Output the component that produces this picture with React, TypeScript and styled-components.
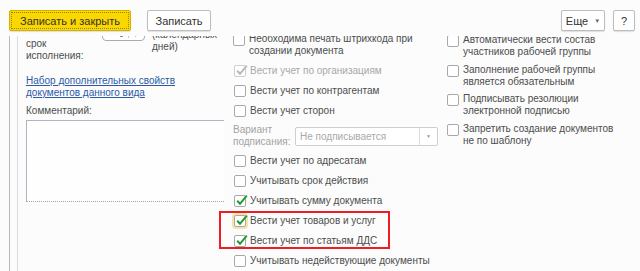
import React from 'react';
import styled, { createGlobalStyle, css } from 'styled-components';

const GlobalStyle = createGlobalStyle`
  html, body {
    margin: 0;
    padding: 0;
    background: #fbfcfb;
  }
  body {
    font-family: "Liberation Sans", Arial, sans-serif;
    font-size: 10px;
    color: #4d4d4d;
  }
`;

const Page = styled.div`
  width: 640px;
  height: 271px;
  overflow: hidden;
  display: flex;
  flex-direction: column;
  background: #fbfcfb;
`;

const Toolbar = styled.div`
  height: 36px;
  flex: none;
  display: flex;
  align-items: flex-start;
  padding: 10px 5px 0 9px;
  box-sizing: border-box;
`;

const Spacer = styled.div`
  flex: 1;
`;

const Button = styled.button<{ $primary?: boolean; $w: number; $gap?: number }>`
  width: ${(p) => p.$w}px;
  height: 21px;
  margin-right: ${(p) => p.$gap ?? 0}px;
  padding: 0;
  font-family: inherit;
  font-size: 11px;
  color: #333;
  border-radius: 2px;
  border: 1px solid #bdbdbd;
  background: #ffffff;
  box-shadow: 0 1px 1px rgba(0, 0, 0, 0.12);
  display: flex;
  align-items: center;
  justify-content: center;
  gap: 6px;
  ${(p) =>
    p.$primary &&
    css`
      background: #fad700;
      border: 1px solid #d2b300;
      outline: 1px dotted #9c8400;
      outline-offset: -3px;
    `}
`;

const Caret = styled.span`
  font-size: 6px;
  color: #666;
`;

const Frame = styled.div`
  flex: 1;
  margin-left: 9px;
  width: 625px;
  padding: 0 7px;
  box-sizing: content-box;
  border-left: 1px solid #b9b9c3;
  border-right: 1px solid #d6d6d6;
  overflow: hidden;
  display: flex;
`;

const Inner = styled.div`
  flex: 1;
  border-left: 1px solid #dcdcdc;
  border-right: 1px solid #bcbcc6;
  overflow: hidden;
`;

const Grid = styled.div`
  margin-top: -16px;
  padding-left: 8px;
  display: grid;
  grid-template-columns: 198px 205px 1fr;
  column-gap: 9px;
  align-items: start;
`;

const Column = styled.div<{ $top: number }>`
  display: flex;
  flex-direction: column;
  padding-top: ${(p) => p.$top}px;
`;

const TermRow = styled.div`
  display: flex;
  align-items: flex-start;
  height: 42px;
`;

const Label = styled.div<{ $w?: number; $top?: number; $muted?: boolean }>`
  width: ${(p) => (p.$w ? `${p.$w}px` : 'auto')};
  margin-top: ${(p) => p.$top ?? 0}px;
  line-height: 12px;
  color: ${(p) => (p.$muted ? '#a3a3a3' : '#4d4d4d')};
  flex: none;
`;

const Spin = styled.div`
  width: 43px;
  height: 19px;
  margin-top: 2px;
  box-sizing: border-box;
  border: 1px solid #a9a9b5;
  border-radius: 0 0 4px 4px;
  background: #fff;
  display: flex;
  justify-content: flex-end;
  align-items: flex-end;
  padding: 0 6px 2px 0;
  gap: 4px;
  font-size: 5px;
  line-height: 6px;
  color: #777;
`;

const SpinSep = styled.span`
  width: 1px;
  height: 6px;
  background: #c8c8c8;
`;

const TermUnit = styled.div`
  margin-left: 7px;
  margin-top: 9px;
  line-height: 12px;
`;

const Link = styled.a`
  display: block;
  margin-top: 13px;
  line-height: 11.5px;
  color: #2c5aa8;
  text-decoration: underline;
  cursor: pointer;
`;

const Memo = styled.div`
  margin-top: 3px;
  height: 82px;
  width: 198px;
  box-sizing: border-box;
  background: #fdfefd;
  border: 1px solid #b3b3c3;
  border-right: none;
  border-bottom: 1px dotted #a5a5a5;
`;

const CheckRow = styled.div<{ $h?: number }>`
  display: flex;
  align-items: center;
  gap: 4px;
  height: ${(p) => p.$h ?? 20}px;
  line-height: 12px;
  padding-left: 1px;
`;

const Box = styled.span<{ $disabled?: boolean; $focused?: boolean }>`
  position: relative;
  flex: none;
  width: 12px;
  height: 12px;
  box-sizing: border-box;
  border: 1px solid ${(p) => (p.$disabled ? '#cfcfcf' : '#a8a8a8')};
  border-radius: 2px;
  background: #fff;
  ${(p) =>
    p.$focused &&
    css`
      box-shadow: 0 0 0 2px #f6e3a6;
    `}
  svg {
    position: absolute;
    left: 0px;
    top: -2px;
  }
`;

const Text = styled.span<{ $muted?: boolean }>`
  color: ${(p) => (p.$muted ? '#a8a8a8' : '#4d4d4d')};
  white-space: nowrap;
`;

const MultiBox = styled(Box)`
  align-self: flex-start;
  margin-top: 1px;
`;

const WrapRow = styled.div<{ $h: number; $pt: number }>`
  display: flex;
  align-items: flex-start;
  gap: 4px;
  height: ${(p) => p.$h}px;
  padding-top: ${(p) => p.$pt}px;
  box-sizing: border-box;
  line-height: 12px;
`;

const SignRow = styled.div`
  display: flex;
  align-items: center;
  height: 30px;
`;

const Select = styled.div`
  margin-left: 5px;
  width: 143px;
  height: 19px;
  box-sizing: border-box;
  border: 1px solid #cfcfcf;
  border-radius: 2px;
  background: #fff;
  display: flex;
  align-items: center;
  color: #a9a9a9;
`;

const SelectValue = styled.span`
  flex: 1;
  padding-left: 4px;
`;

const SelectArrow = styled.span`
  width: 17px;
  height: 100%;
  border-left: 1px solid #dedede;
  display: flex;
  align-items: center;
  justify-content: center;
  font-size: 5px;
  color: #999;
`;

const Highlight = styled.div`
  position: relative;
  &::before {
    content: '';
    position: absolute;
    left: -14px;
    top: 0px;
    width: 171px;
    height: 38px;
    box-sizing: border-box;
    border: 2px solid #ee1d23;
    pointer-events: none;
  }
`;

const Check = ({ color }: { color: string }) => (
  <svg width="13" height="13" viewBox="0 0 13 13">
    <path d="M2.2 6.8 L5 9.8 L11.8 1.6" fill="none" stroke={color} strokeWidth="2" />
  </svg>
);

type Item = { text: string; checked?: boolean; disabled?: boolean; focused?: boolean };

const CheckItem = ({ text, checked, disabled, focused }: Item) => (
  <CheckRow>
    <Box $disabled={disabled} $focused={focused}>
      {checked && <Check color={disabled ? '#b9b9b9' : '#1f9a35'} />}
    </Box>
    <Text $muted={disabled}>{text}</Text>
  </CheckRow>
);

const WrapItem = ({ lines, h, pt }: { lines: string[]; h: number; pt: number }) => (
  <WrapRow $h={h} $pt={pt}>
    <MultiBox />
    <Text>
      {lines[0]}
      <br />
      {lines[1]}
    </Text>
  </WrapRow>
);

const rightItems = [
  ['Автоматически вести состав', 'участников рабочей группы'],
  ['Заполнение рабочей группы', 'является обязательным'],
  ['Подписывать резолюции', 'электронной подписью'],
  ['Запретить создание документов', 'не по шаблону'],
];

const App = () => {
  return (
    <Page>
      <GlobalStyle />
      <Toolbar>
        <Button $primary $w={122} $gap={16}>
          Записать и закрыть
        </Button>
        <Button $w={64}>Записать</Button>
        <Spacer />
        <Button $w={44} $gap={8}>
          Еще <Caret>▼</Caret>
        </Button>
        <Button $w={22}>?</Button>
      </Toolbar>
      <Frame>
        <Inner>
          <Grid>
            <Column $top={0}>
              <TermRow>
                <Label $w={76} $top={18}>
                  срок
                  <br />
                  исполнения:
                </Label>
                <Spin>
                  <span>▲</span>
                  <SpinSep />
                  <span>▼</span>
                </Spin>
                <TermUnit>
                  (календарных
                  <br />
                  дней)
                </TermUnit>
              </TermRow>
              <Link>
                Набор дополнительных свойств
                <br />
                документов данного вида
              </Link>
              <Label $top={7}>Комментарий:</Label>
              <Memo />
            </Column>
            <Column $top={9}>
              <WrapItem lines={['Необходима печать штрихкода при', 'создании документа']} h={32} pt={4} />
              <CheckItem text="Вести учет по организациям" checked disabled />
              <CheckItem text="Вести учет по контрагентам" />
              <CheckItem text="Вести учет сторон" />
              <SignRow>
                <Label $w={57} $muted>
                  Вариант
                  <br />
                  подписания:
                </Label>
                <Select>
                  <SelectValue>Не подписывается</SelectValue>
                  <SelectArrow>▼</SelectArrow>
                </Select>
              </SignRow>
              <CheckItem text="Вести учет по адресатам" />
              <CheckItem text="Учитывать срок действия" />
              <CheckItem text="Учитывать сумму документа" checked />
              <Highlight>
                <CheckItem text="Вести учет товаров и услуг" checked focused />
                <CheckItem text="Вести учет по статьям ДДС" checked />
              </Highlight>
              <CheckItem text="Учитывать недействующие документы" />
            </Column>
            <Column $top={11}>
              {rightItems.map((lines) => (
                <WrapItem key={lines[0]} lines={lines} h={29.5} pt={3} />
              ))}
            </Column>
          </Grid>
        </Inner>
      </Frame>
    </Page>
  );
};

export default App;
